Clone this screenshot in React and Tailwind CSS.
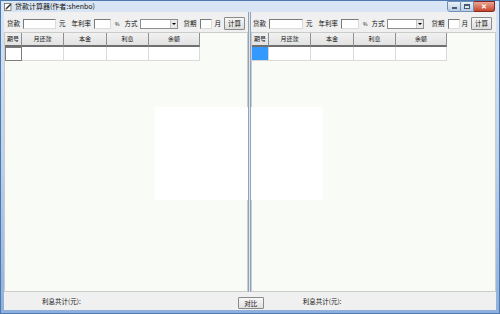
import React from 'react';

const leftBar = { label1: 3, in1: 33, yuan: 3, rate: 6, in2: 17, pct: 4, fs: 5, sel: 38, qi: 6, in3: 12, yue: 3, btn: 3 };
const rightBar = { label1: 2, in1: 34, yuan: 3, rate: 6, in2: 18, pct: 4, fs: 4, sel: 37, qi: 8, in3: 12, yue: 2, btn: 3 };

const cols = [
    { name: '期号', w: 17 },
    { name: '月还款', w: 42 },
    { name: '本金', w: 43 },
    { name: '利息', w: 42 },
    { name: '余额', w: 51 },
];

function Field({ w }) {
    return (
        <div
            className="h-[10px] bg-white border border-t-[#7a7a7a] border-l-[#7a7a7a] border-r-[#dcdcdc] border-b-[#dcdcdc] shrink-0"
            style={{ width: w }}
        />
    );
}

function Select({ w }) {
    return (
        <div className="h-[10px] bg-white border border-[#8e8e8e] flex justify-end shrink-0" style={{ width: w }}>
            <div className="w-[7px] h-full bg-[#e9e9e9] border-l border-[#c4c4c4] flex items-center justify-center">
                <div className="w-0 h-0 border-l-[2px] border-r-[2px] border-t-[2px] border-l-transparent border-r-transparent border-t-black" />
            </div>
        </div>
    );
}

function Toolbar({ s }) {
    const m = (v) => ({ marginLeft: v });
    return (
        <div className="h-[20px] pt-[3px] flex items-center text-[6.5px] leading-none text-[#111]">
            <span style={m(s.label1)}>贷款</span>
            <div style={m(3)}><Field w={s.in1} /></div>
            <span style={m(s.yuan)}>元</span>
            <span style={m(s.rate)}>年利率</span>
            <div style={m(3)}><Field w={s.in2} /></div>
            <span className="text-[5px]" style={m(s.pct)}>%</span>
            <span style={m(s.fs)}>方式</span>
            <div style={m(2)}><Select w={s.sel} /></div>
            <span style={m(s.qi)}>贷期</span>
            <div style={m(3)}><Field w={s.in3} /></div>
            <span style={m(s.yue)}>月</span>
            <button
                className="h-[13px] w-[21px] bg-gradient-to-b from-[#f6f6f6] to-[#dedede] border border-[#8a8a8a] rounded-[1px] text-[6.5px] leading-none text-[#111] flex items-center justify-center"
                style={m(s.btn)}
            >
                计算
            </button>
        </div>
    );
}

function Table({ active }) {
    return (
        <div className="flex-1 bg-[#f9fbf6] border border-[#c9ccc9]">
            <div className="flex">
                {cols.map((c) => (
                    <div
                        key={c.name}
                        className="h-[14px] flex items-center justify-center bg-gradient-to-b from-[#f1f1f1] to-[#e2e2e2] border-r border-b-2 border-r-[#8f8f8f] border-b-[#6f6f6f] text-[6px] leading-none text-[#111]"
                        style={{ width: c.w }}
                    >
                        {c.name}
                    </div>
                ))}
            </div>
            <div className="flex">
                {cols.map((c, i) => (
                    <div
                        key={c.name}
                        className={
                            i === 0
                                ? active
                                    ? 'h-[14px] bg-[#3399ff] border-r border-b border-[#d6d6d6]'
                                    : 'h-[14px] bg-white border border-[#7d7d7d]'
                                : 'h-[14px] bg-white border-r border-b border-[#dadada]'
                        }
                        style={{ width: c.w }}
                    />
                ))}
            </div>
        </div>
    );
}

function CaptionButtons() {
    return (
        <div className="flex h-[11px] mr-[4px]">
            <div className="w-[14px] h-full rounded-bl-[3px] border border-[#6f8fb8] bg-gradient-to-b from-[#e9f0f8] to-[#b9cde6] flex items-end justify-center pb-[2px]">
                <div className="w-[5px] h-[2px] bg-white border border-[#4a5a70]" />
            </div>
            <div className="w-[13px] h-full border-y border-r border-[#6f8fb8] bg-gradient-to-b from-[#e9f0f8] to-[#b9cde6] flex items-center justify-center">
                <div className="w-[6px] h-[5px] border border-[#4a5a70] border-t-2 bg-[#dce6f2]" />
            </div>
            <div className="w-[21px] h-full rounded-br-[3px] border-y border-r border-[#8a2a1f] bg-gradient-to-b from-[#e8a593] to-[#c7432a] flex items-center justify-center text-white text-[7px] font-bold leading-none">
                ✕
            </div>
        </div>
    );
}

export default function App() {
    return (
        <div className="w-[500px] h-[314px] flex flex-col bg-gradient-to-b from-[#dae6f4] via-[#bcd1eb] to-[#8fb0dc] border border-[#4d79b3] font-['Noto_Sans_CJK_SC',sans-serif] overflow-hidden relative">
            <div className="h-[11px] flex items-start justify-between">
                <div className="flex items-center h-[11px] pl-[3px] gap-[3px]">
                    <svg width="8" height="8" viewBox="0 0 8 8">
                        <rect x="0.5" y="0.5" width="6.5" height="7" fill="#fff" stroke="#6b6b6b" strokeWidth="0.8" />
                        <path d="M2 6 L6.8 1.2" stroke="#2a2a2a" strokeWidth="1.4" />
                        <path d="M1.6 6.6 L2.4 5.6" stroke="#d59a3a" strokeWidth="1.2" />
                    </svg>
                    <span className="text-[7px] leading-none text-[#111]">贷款计算器(作者:shenbo)</span>
                </div>
                <CaptionButtons />
            </div>
            <div className="flex-1 mx-[3px] mb-[3px] flex flex-col bg-[#f0f0f0]">
                <div className="flex-1 flex relative">
                    <div className="w-[244px] flex flex-col">
                        <Toolbar s={leftBar} />
                        <Table active={false} />
                    </div>
                    <div className="w-[3px] relative z-10 bg-[#dfe6ee] border-x border-[#8fa3bd]" />
                    <div className="flex-1 flex flex-col">
                        <Toolbar s={rightBar} />
                        <Table active />
                    </div>
                    <div className="absolute left-[151px] top-[95px] w-[96px] h-[93px] bg-white" />
                    <div className="absolute left-[247px] top-[95px] w-[72px] h-[93px] bg-white" />
                </div>
                <div className="h-[18px] flex items-center text-[6.5px] leading-none text-[#111]">
                    <span className="ml-[38px]">利息共计(元):</span>
                    <button className="ml-[157px] mt-[4px] h-[12px] w-[26px] bg-gradient-to-b from-[#f8f8f8] to-[#e0e0e0] border border-[#8a8a8a] rounded-[1px] text-[6.5px] leading-none text-[#111] flex items-center justify-center">
                        对比
                    </button>
                    <span className="ml-[39px]">利息共计(元):</span>
                </div>
            </div>
        </div>
    );
}
